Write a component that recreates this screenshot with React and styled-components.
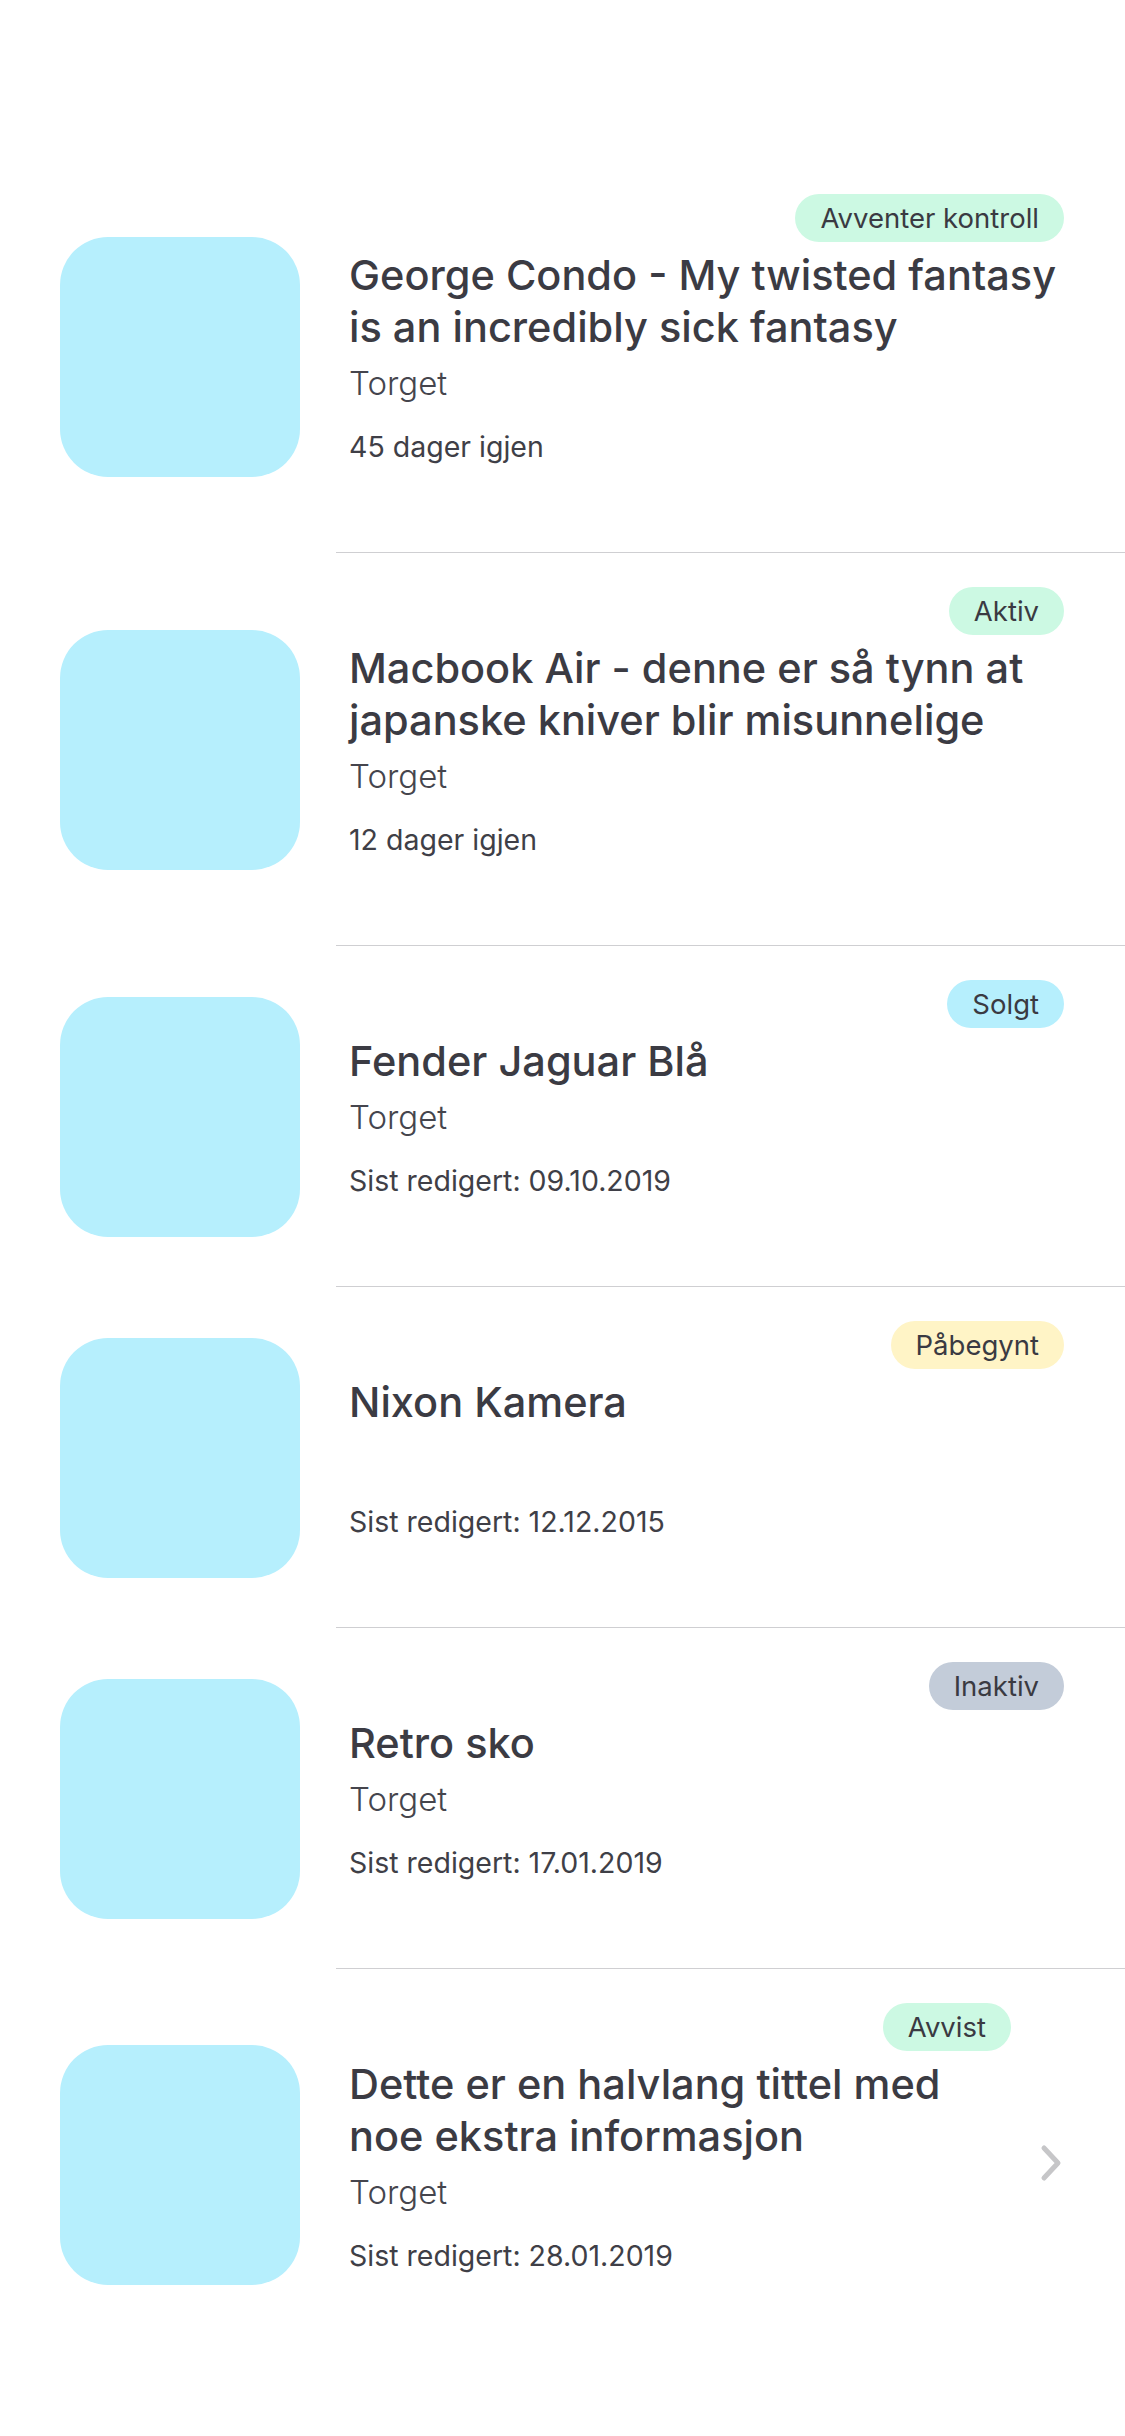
import React from "react";
import styled, { createGlobalStyle } from "styled-components";

const GlobalStyle = createGlobalStyle`
  html, body {
    margin: 0;
    padding: 0;
    background: #ffffff;
  }
  body {
    font-family: Inter, "Noto Sans", "Liberation Sans", sans-serif;
    color: #3f3f47;
  }
`;

const badgeColors = {
  green: "#ccf9e3",
  cyan: "#b6effd",
  yellow: "#fff4c6",
  gray: "#c3ccd9",
};

const ads = [
  {
    title: "George Condo - My twisted fantasy is an incredibly sick fantasy",
    where: "Torget",
    meta: "45 dager igjen",
    status: "Avventer kontroll",
    tone: "green",
  },
  {
    title: "Macbook Air - denne er så tynn at japanske kniver blir misunnelige",
    where: "Torget",
    meta: "12 dager igjen",
    status: "Aktiv",
    tone: "green",
  },
  {
    title: "Fender Jaguar Blå",
    where: "Torget",
    meta: "Sist redigert: 09.10.2019",
    status: "Solgt",
    tone: "cyan",
  },
  {
    title: "Nixon Kamera",
    where: "",
    meta: "Sist redigert: 12.12.2015",
    status: "Påbegynt",
    tone: "yellow",
  },
  {
    title: "Retro sko",
    where: "Torget",
    meta: "Sist redigert: 17.01.2019",
    status: "Inaktiv",
    tone: "gray",
  },
  {
    title: "Dette er en halvlang tittel med noe ekstra informasjon",
    where: "Torget",
    meta: "Sist redigert: 28.01.2019",
    status: "Avvist",
    tone: "green",
    chevron: true,
  },
];

const List = styled.ul`
  list-style: none;
  margin: 0;
  padding: 160px 0 0;
`;

const Row = styled.li`
  display: flex;
  align-items: center;

  &:last-child > div:last-child {
    border-bottom: none;
  }
`;

const Thumb = styled.div`
  flex: 0 0 240px;
  width: 240px;
  height: 240px;
  margin-left: 60px;
  border-radius: 48px;
  background: #b6effd;
`;

const Body = styled.div`
  flex: 1;
  display: flex;
  align-items: center;
  margin-left: 36px;
  padding: 34px 61px 85px 13px;
  border-bottom: 1px solid #cfcfd2;
  min-width: 0;
`;

const Content = styled.div`
  flex: 1;
  display: flex;
  flex-direction: column;
  min-width: 0;
`;

const Badge = styled.span`
  align-self: flex-end;
  height: 48px;
  line-height: 48px;
  padding: 0 25px;
  border-radius: 24px;
  font-size: 27.5px;
  font-weight: 400;
  color: #3a3a42;
  background: ${(p) => badgeColors[p.$tone]};
`;

const Title = styled.h2`
  margin: 7px 0 0;
  font-size: 41.5px;
  line-height: 52px;
  font-weight: 500;
  color: #3b3b43;
`;

const Where = styled.div`
  margin-top: 8px;
  height: 44px;
  font-size: 33px;
  line-height: 44px;
  font-weight: 300;
  color: #45454d;
`;

const Meta = styled.div`
  margin-top: 22px;
  font-size: 28.5px;
  line-height: 40px;
  font-weight: 400;
  color: #3f3f47;
`;

/* body padding is uneven, so push the arrow down to the row's middle */
const Chevron = styled.svg`
  flex: 0 0 auto;
  margin: 46px 0 0 29px;
  width: 24px;
  height: 40px;
`;

function ChevronIcon() {
  return (
    <Chevron viewBox="0 0 24 40">
      <path
        d="M4 5 L18 20 L4 35"
        fill="none"
        stroke="#c6c6c8"
        strokeWidth="5"
        strokeLinecap="round"
        strokeLinejoin="round"
      />
    </Chevron>
  );
}

export default function App() {
  return (
    <>
      <GlobalStyle />
      <List>
        {ads.map((ad) => (
          <Row key={ad.title}>
            <Thumb />
            <Body>
              <Content>
                <Badge $tone={ad.tone}>{ad.status}</Badge>
                <Title>{ad.title}</Title>
                <Where>{ad.where}</Where>
                <Meta>{ad.meta}</Meta>
              </Content>
              {ad.chevron && <ChevronIcon />}
            </Body>
          </Row>
        ))}
      </List>
    </>
  );
}
